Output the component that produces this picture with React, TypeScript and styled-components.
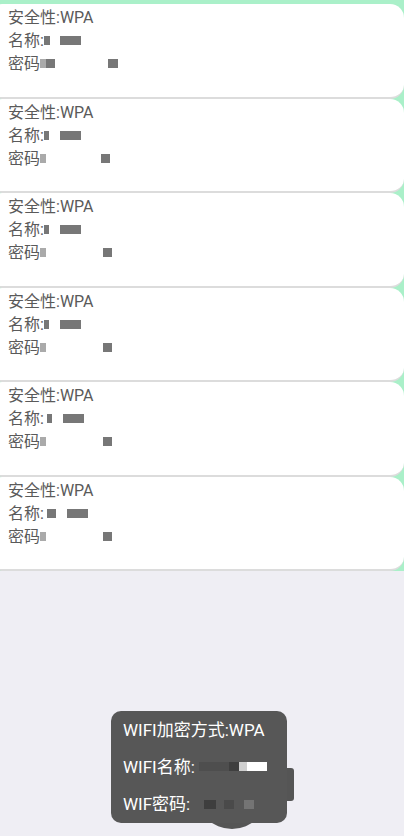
import React from 'react';
import styled, { createGlobalStyle } from 'styled-components';

const GlobalStyle = createGlobalStyle`
  html, body {
    margin: 0;
    padding: 0;
    background: #efeef4;
    font-family: Roboto, "Noto Sans CJK SC", sans-serif;
  }
`;

const Page = styled.div`
  width: 404px;
  height: 836px;
  position: relative;
  overflow: hidden;
  background: #efeef4;
`;

const List = styled.div`
  background: #aaf0c9;
  padding-top: 4px;
  display: flex;
  flex-direction: column;
`;

const Card = styled.div`
  box-sizing: border-box;
  margin-left: -12px;
  height: 94.5px;
  padding: 2px 0 0 20px;
  background: #fff;
  border-radius: 14px;
  border-bottom: 2px solid #dcdcdc;
  display: flex;
  flex-direction: column;
`;

const Line = styled.div`
  font-size: 16px;
  line-height: 23px;
  color: #5a5a5a;
  display: flex;
  align-items: center;
  white-space: nowrap;
`;

const Blur = styled.span<{ $w: number; $c: string; $gap?: number }>`
  display: inline-block;
  width: ${(p) => p.$w}px;
  height: 9px;
  margin-left: ${(p) => p.$gap ?? 0}px;
  background: ${(p) => p.$c};
`;

const Toast = styled.div`
  position: absolute;
  left: 111px;
  top: 711px;
  width: 176px;
  height: 112px;
  padding: 0 0 0 12px;
  box-sizing: border-box;
  background: #575757;
  border-radius: 10px;
  display: flex;
  flex-direction: column;
  justify-content: space-around;
`;

const ToastLine = styled.div`
  color: #fff;
  font-size: 17px;
  line-height: 20px;
  display: flex;
  align-items: center;
  white-space: nowrap;
  position: relative;
  z-index: 1;
`;

const ToastBlob = styled.div`
  position: absolute;
  left: 196px;
  top: 785px;
  width: 72px;
  height: 44px;
  border-radius: 0 0 36px 36px;
  background: #555;
`;

const ToastTab = styled.div`
  position: absolute;
  left: 282px;
  top: 768px;
  width: 12px;
  height: 33px;
  border-radius: 3px;
  background: #555;
`;

type Row = { name: [number, number][]; pass: [number, number, string][] };

const rows: Row[] = [
  { name: [[6, 0], [21, 10]], pass: [[6, 0], [9, 0], [10, 53]] },
  { name: [[5, 0], [21, 11]], pass: [[6, 0], [9, 55]] },
  { name: [[5, 0], [21, 11]], pass: [[6, 0], [9, 57]] },
  { name: [[5, 0], [21, 11]], pass: [[6, 0], [9, 57]] },
  { name: [[5, 3], [21, 11]], pass: [[6, 0], [9, 57]] },
  { name: [[9, 3], [21, 11]], pass: [[6, 0], [9, 57]] },
].map((r) => ({
  name: r.name as [number, number][],
  pass: (r.pass as number[][]).map((p, i) => [p[0], p[1], i === 0 ? '#aaa' : '#777'] as [number, number, string]),
}));

export default function App() {
  return (
    <Page>
      <GlobalStyle />
      <List>
        {rows.map((r, i) => (
          <Card key={i}>
            <Line>安全性:WPA</Line>
            <Line>
              名称:
              {r.name.map(([w, g], j) => (
                <Blur key={j} $w={w} $gap={g} $c="#777" />
              ))}
            </Line>
            <Line>
              密码
              {r.pass.map(([w, g, c], j) => (
                <Blur key={j} $w={w} $gap={g} $c={c} />
              ))}
            </Line>
          </Card>
        ))}
      </List>
      <ToastTab />
      <ToastBlob />
      <Toast>
        <ToastLine>WIFI加密方式:WPA</ToastLine>
        <ToastLine>
          WIFI名称:
          <Blur $w={30} $c="#4e4e4e" $gap={4} />
          <Blur $w={10} $c="#3f3f3f" />
          <Blur $w={8} $c="#cfcfcf" />
          <Blur $w={20} $c="#fff" />
        </ToastLine>
        <ToastLine>
          WIF密码:
          <Blur $w={12} $c="#3e3e3e" $gap={14} />
          <Blur $w={10} $c="#4a4a4a" $gap={8} />
          <Blur $w={10} $c="#747474" $gap={10} />
        </ToastLine>
      </Toast>
    </Page>
  );
}
